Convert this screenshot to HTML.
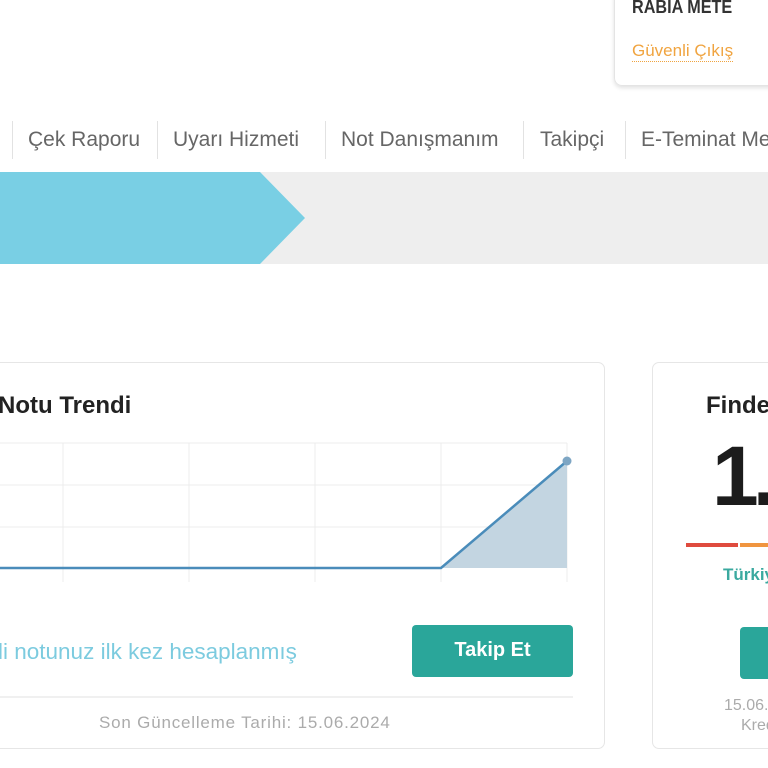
<!DOCTYPE html>
<html><head><meta charset="utf-8"><style>
*{margin:0;padding:0;box-sizing:border-box}
html,body{width:768px;height:768px;overflow:hidden;background:#fff}
body{font-family:"Liberation Sans",sans-serif}
#w{position:relative;width:768px;height:768px;overflow:hidden}
.a{position:absolute;white-space:nowrap}
.nav{top:128px;font-size:21px;color:#666}
.sep{position:absolute;top:121px;width:1px;height:38px;background:#e2e2e2}
</style></head><body><div id="w">
<div class="a" style="left:614px;top:-10px;width:170px;height:96px;border:1px solid #e4e4e4;border-radius:8px;box-shadow:0 2px 4px rgba(0,0,0,.12)"></div>
<div class="a" style="left:632px;top:-3px;font-size:18px;font-weight:bold;color:#333;transform:scaleX(.9);transform-origin:left">RABIA METE</div>
<div class="a" style="left:632px;top:41px;font-size:17px;color:#f0a440;border-bottom:1px dotted #f0a440">Güvenli Çıkış</div>

<div class="sep" style="left:12px"></div><div class="sep" style="left:157px"></div><div class="sep" style="left:325px"></div><div class="sep" style="left:523px"></div><div class="sep" style="left:625px"></div>
<div class="a nav" style="left:28px">Çek Raporu</div>
<div class="a nav" style="left:173px">Uyarı Hizmeti</div>
<div class="a nav" style="left:341px">Not Danışmanım</div>
<div class="a nav" style="left:540px">Takipçi</div>
<div class="a nav" style="left:641px">E-Teminat Merkezi</div>

<div class="a" style="left:0;top:172px;width:768px;height:92px;background:#eeeeee"></div>
<svg class="a" style="left:0;top:172px" width="310" height="92"><polygon points="0,0 260,0 305,46 260,92 0,92" fill="#79cfe4"/></svg>

<div class="a" style="left:-10px;top:362px;width:615px;height:387px;border:1px solid #e6e6e6;border-radius:7px"></div>
<div class="a" style="left:-2px;top:392px;font-size:24px;font-weight:bold;color:#222">Notu Trendi</div>
<svg class="a" style="left:0;top:440px" width="580" height="150">
<g stroke="#ececec" stroke-width="1">
<line x1="0" y1="3" x2="567" y2="3"/><line x1="0" y1="45" x2="567" y2="45"/><line x1="0" y1="87" x2="567" y2="87"/>
<line x1="63" y1="3" x2="63" y2="142"/><line x1="189" y1="3" x2="189" y2="142"/><line x1="315" y1="3" x2="315" y2="142"/><line x1="441" y1="3" x2="441" y2="142"/><line x1="567" y1="3" x2="567" y2="142"/>
</g>
<polygon points="441,128 567,21 567,128" fill="#c3d5e1"/>
<polyline points="0,128 441,128 567,21" fill="none" stroke="#4a8cba" stroke-width="2.5"/>
<circle cx="567" cy="21" r="4.5" fill="#7ea6c4"/>
</svg>
<div class="a" style="left:-2px;top:639px;font-size:22.5px;color:#7ccbdf">li notunuz ilk kez hesaplanmış</div>
<div class="a" style="left:412px;top:625px;width:161px;height:52px;background:#2aa69a;border-radius:4px;color:#fff;font-weight:bold;font-size:20px;text-align:center;line-height:50px">Takip Et</div>
<div class="a" style="left:0;top:696px;width:573px;height:2px;background:#f0f0f0"></div>
<div class="a" style="left:99px;top:713px;font-size:17px;letter-spacing:.8px;color:#ababab">Son Güncelleme Tarihi: 15.06.2024</div>

<div class="a" style="left:652px;top:362px;width:140px;height:387px;border:1px solid #e6e6e6;border-radius:7px"></div>
<div class="a" style="left:706px;top:392px;font-size:24px;font-weight:bold;color:#222">Findeks</div>
<div class="a" style="left:712px;top:428px;font-size:84px;font-weight:bold;color:#1c1c1c;letter-spacing:-6px">1.</div>
<div class="a" style="left:686px;top:543px;width:52px;height:4px;background:#df4b3e"></div>
<div class="a" style="left:740px;top:543px;width:40px;height:4px;background:#f0953f"></div>
<div class="a" style="left:723px;top:565px;font-size:17px;font-weight:bold;color:#3aa99f">Türkiye</div>
<div class="a" style="left:740px;top:627px;width:60px;height:52px;background:#2aa69a;border-radius:4px"></div>
<div class="a" style="left:724px;top:697px;font-size:16px;color:#ababab">15.06.2024</div>
<div class="a" style="left:741px;top:717px;font-size:16px;color:#ababab">Kredi</div>
</div></body></html>
